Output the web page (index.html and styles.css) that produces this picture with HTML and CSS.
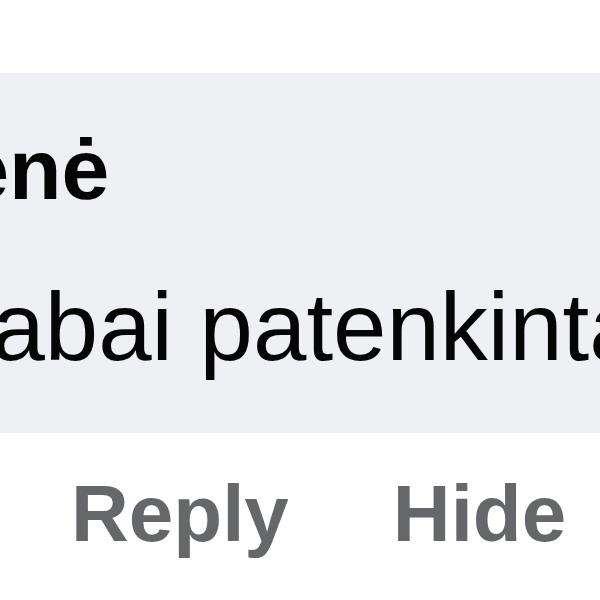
FILE: index.html
```html
<!DOCTYPE html>
<html lang="lt">
<head>
<meta charset="utf-8">
<title>Komentaras</title>
<link rel="stylesheet" href="styles.css">
</head>
<body>
<div class="comment">
  <div class="bubble">
    <div class="name">Rūtienė</div>
    <div class="text">Esu labai patenkinta</div>
  </div>
  <div class="actions">
    <span class="action">Reply</span>
    <span class="action">Hide</span>
  </div>
</div>
</body>
</html>
```
FILE: styles.css
```css
html, body {
  margin: 0;
  padding: 0;
  background: #ffffff;
  overflow: hidden;
  width: 600px;
  height: 600px;
}

.comment {
  padding-top: 73px;
  margin-left: -257px;
  font-family: "Liberation Sans", Arial, sans-serif;
}

.bubble {
  background: #eff0f4;
  width: 900px;
  height: 360px;
  box-sizing: border-box;
  padding: 51px 40px 0 40px;
  border-radius: 36px;
  white-space: nowrap;
}

.name {
  margin-left: 11px;
  font-size: 86px;
  line-height: 90px;
  font-weight: 700;
  color: #050505;
}

.text {
  margin-top: 65px;
  margin-left: -5px;
  font-size: 96px;
  line-height: 96px;
  color: #050505;
}

.actions {
  margin-top: 41px;
  padding-left: 328px;
  display: flex;
  gap: 104px;
  white-space: nowrap;
}

.action {
  font-size: 80px;
  line-height: 80px;
  font-weight: 700;
  color: #65676b;
}
```
